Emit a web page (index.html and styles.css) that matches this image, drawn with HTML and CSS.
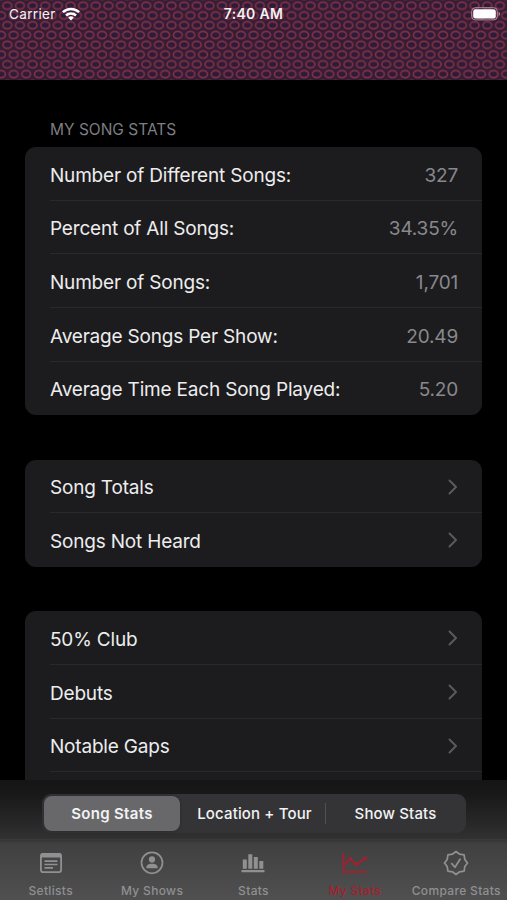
FILE: index.html
```html
<!DOCTYPE html>
<html lang="en">
<head>
<meta charset="utf-8">
<title>My Song Stats</title>
<link rel="stylesheet" href="styles.css">
</head>
<body>
<div class="app">
  <header class="top">
    <svg class="pattern" width="507" height="80" aria-hidden="true">
      <defs>
        <pattern id="rings" width="12.63" height="19.56" patternUnits="userSpaceOnUse" patternTransform="translate(1 -4.1)">
          <g fill="#2b1c3c" stroke="#852f43" stroke-width="1.6">
            <ellipse cx="6.315" cy="9.78" rx="4.4" ry="3.5"/>
            <ellipse cx="0" cy="0" rx="4.4" ry="3.5"/>
            <ellipse cx="12.63" cy="0" rx="4.4" ry="3.5"/>
            <ellipse cx="0" cy="19.56" rx="4.4" ry="3.5"/>
            <ellipse cx="12.63" cy="19.56" rx="4.4" ry="3.5"/>
          </g>
        </pattern>
      </defs>
      <rect width="507" height="80" fill="#331e36"/>
      <rect width="507" height="80" fill="url(#rings)"/>
    </svg>
    <div class="status">
      <div class="carrier"><span>Carrier</span>
        <svg width="18" height="14" viewBox="0 0 18 14" fill="none" stroke="#fff" stroke-width="2.5">
          <path d="M.9 5.2a11.6 11.6 0 0 1 16.2 0M4 8.5a7.2 7.2 0 0 1 10 0"/>
          <path d="M6.2 10.7a4 4 0 0 1 5.6 0L9 13.6z" fill="#fff" stroke="none"/>
        </svg>
      </div>
      <div class="clock">7:40 AM</div>
      <div class="battery">
        <svg width="30" height="14" viewBox="0 0 30 14">
          <rect x=".7" y=".7" width="25.6" height="12.2" rx="3.6" fill="none" stroke="#b28d9b" stroke-width="1"/>
          <rect x="2.2" y="2.2" width="22.6" height="9.2" rx="2.2" fill="#fff"/>
          <path d="M27.6 4.5q3 2.3 0 4.6z" fill="#b28d9b"/>
        </svg>
      </div>
    </div>
  </header>

  <main class="content">
    <h2 class="heading">MY SONG STATS</h2>
    <section class="card">
      <div class="row"><span>Number of Different Songs:</span><span class="value">327</span></div>
      <div class="row"><span>Percent of All Songs:</span><span class="value">34.35%</span></div>
      <div class="row"><span>Number of Songs:</span><span class="value">1,701</span></div>
      <div class="row"><span>Average Songs Per Show:</span><span class="value">20.49</span></div>
      <div class="row"><span>Average Time Each Song Played:</span><span class="value">5.20</span></div>
    </section>
    <section class="card">
      <div class="row"><span>Song Totals</span><svg class="chevron" viewBox="0 0 10 16"><path d="m1.5 1.5 6.5 6.5-6.5 6.5"/></svg></div>
      <div class="row"><span>Songs Not Heard</span><svg class="chevron" viewBox="0 0 10 16"><path d="m1.5 1.5 6.5 6.5-6.5 6.5"/></svg></div>
    </section>
    <section class="card">
      <div class="row"><span>50% Club</span><svg class="chevron" viewBox="0 0 10 16"><path d="m1.5 1.5 6.5 6.5-6.5 6.5"/></svg></div>
      <div class="row"><span>Debuts</span><svg class="chevron" viewBox="0 0 10 16"><path d="m1.5 1.5 6.5 6.5-6.5 6.5"/></svg></div>
      <div class="row"><span>Notable Gaps</span><svg class="chevron" viewBox="0 0 10 16"><path d="m1.5 1.5 6.5 6.5-6.5 6.5"/></svg></div>
      <div class="row"></div>
    </section>
  </main>

  <footer class="bottom">
    <div class="segments">
      <div class="segment selected">Song Stats</div>
      <div class="segment">Location + Tour</div>
      <div class="segment divided">Show Stats</div>
    </div>
    <nav class="tabs">
      <div class="tab">
        <svg width="26" height="26" viewBox="0 0 26 26" fill="none" stroke="currentColor">
          <rect x="2.9" y="3.9" width="20.2" height="18.2" rx="2" stroke-width="1.8"/>
          <path d="M3 5.5h20" stroke-width="4"/>
          <path d="M6.5 11.1h13M6.5 14.5h13M6.5 17.9h8.5" stroke-width="1.6"/>
        </svg><span>Setlists</span>
      </div>
      <div class="tab">
        <svg width="26" height="26" viewBox="0 0 26 26" fill="currentColor">
          <circle cx="13" cy="12.8" r="10.5" fill="none" stroke="currentColor" stroke-width="1.7"/>
          <circle cx="13" cy="9.4" r="3.1"/>
          <path d="M7.4 18.2v-1.1c0-2.2 2.5-3.4 5.6-3.4s5.6 1.2 5.6 3.4v1.1z"/>
        </svg><span>My Shows</span>
      </div>
      <div class="tab">
        <svg width="26" height="26" viewBox="0 0 26 26" fill="currentColor">
          <path d="M1.5 20h23v2.2h-23zM2.8 9.5h4v9.2h-4zM8.3 4.3h4v14.4h-4zM13.8 7h4v11.7h-4zM19.3 11h4v7.7h-4z"/>
        </svg><span>Stats</span>
      </div>
      <div class="tab active">
        <svg width="26" height="26" viewBox="0 0 26 26" fill="none" stroke="currentColor" stroke-width="1.8">
          <path d="M1.5 2.8v19.1H25"/>
          <path d="m2 15 6.4-6.2 6.2 6L23.5 8"/>
          <circle cx="8.4" cy="9" r="1.1" fill="currentColor"/><circle cx="14.6" cy="14.3" r="1.1" fill="currentColor"/><circle cx="23" cy="8.3" r="1.1" fill="currentColor"/>
        </svg><span>My Stats</span>
      </div>
      <div class="tab">
        <svg width="26" height="26" viewBox="0 0 26 26" fill="none" stroke="currentColor" stroke-width="1.7" stroke-linejoin="round" stroke-linecap="round">
          <path d="M13 1.5 16.6 4.2 21.1 4.9 21.8 9.4 24.5 13 21.8 16.6 21.1 21.1 16.6 21.8 13 24.5 9.4 21.8 4.9 21.1 4.2 16.6 1.5 13 4.2 9.4 4.9 4.9 9.4 4.2z"/>
          <path d="m8.8 13.6 3.2 3.7L17 9.2"/>
        </svg><span>Compare Stats</span>
      </div>
    </nav>
  </footer>
</div>
</body>
</html>
```

FILE: styles.css
```css
* { box-sizing: border-box; }
body { margin: 0; background: #000; color: #ededee; font-family: Inter, "Liberation Sans", sans-serif; }
.app { height: 900px; display: flex; flex-direction: column; overflow: hidden; }

.top { height: 80px; flex: none; position: relative; }
.pattern { position: absolute; inset: 0; }
.status { position: relative; display: grid; grid-template-columns: 1fr auto 1fr; align-items: center; height: 27px; padding: 0 6px 0 9px; color: #f5f1f3; }
.carrier { display: flex; align-items: center; gap: 6px; font-size: 13.5px; letter-spacing: .35px; }
.clock { font-size: 14px; font-weight: 600; letter-spacing: .3px; margin-right: 3px; }
.battery { display: flex; justify-content: flex-end; }

.content { flex: 1; min-height: 0; overflow: hidden; padding: 40px 25px 0; }
.heading { margin: 0 0 8px; padding-left: 25px; font-size: 15.5px; line-height: 19px; font-weight: 400; color: #7e7e83; }
.card { background: #1c1c1e; border-radius: 11px; margin-bottom: 44.2px; padding-left: 25px; overflow: hidden; }
.row { display: flex; align-items: center; justify-content: space-between; height: 53.7px; padding: 3.6px 24px 0 0; font-size: 19px; letter-spacing: -.19px; border-bottom: 1px solid #29292b; }
.row:last-child { border-bottom: 0; padding-top: 2.6px; }
.value { color: #88888d; }
.chevron { width: 10px; height: 16px; margin-top: -2px; fill: none; stroke: #5a5a5e; stroke-width: 2; stroke-linecap: round; stroke-linejoin: round; }

.bottom { display: flex; flex-direction: column; height: 120px; flex: none; background: linear-gradient(#151515 0, #191919 15px, #303030 58px, #404040 64px, #505050 120px); }
.segments { display: grid; grid-template-columns: 138px 143px 139px; width: 424px; height: 39px; margin: 14px 0 0 42px; padding: 2px; background: #343436; border-radius: 9px; }
.segment { display: flex; align-items: center; justify-content: center; font-size: 15px; font-weight: 500; letter-spacing: .15px; padding-left: 2px; color: #f2f2f3; position: relative; white-space: nowrap; }
.selected { background: #68686b; border-radius: 8px; margin-right: 2px; padding-left: 0; font-weight: 600; letter-spacing: .3px; box-shadow: 0 0 3px #0004; }
.divided::before { content: ""; position: absolute; left: 0; top: 7px; width: 1px; height: 21px; background: #505053; }
.tabs { display: grid; grid-template-columns: repeat(5, 1fr); height: 61px; margin-top: 6px; border-top: 1px solid #3a3a3a; }
.tab { display: flex; flex-direction: column; align-items: center; padding-top: 10px; color: #909092; }
.tab span { font-size: 12px; font-weight: 500; line-height: 15px; margin-top: 7px; letter-spacing: .33px; white-space: nowrap; }
.active { color: #a51f2e; }
```
